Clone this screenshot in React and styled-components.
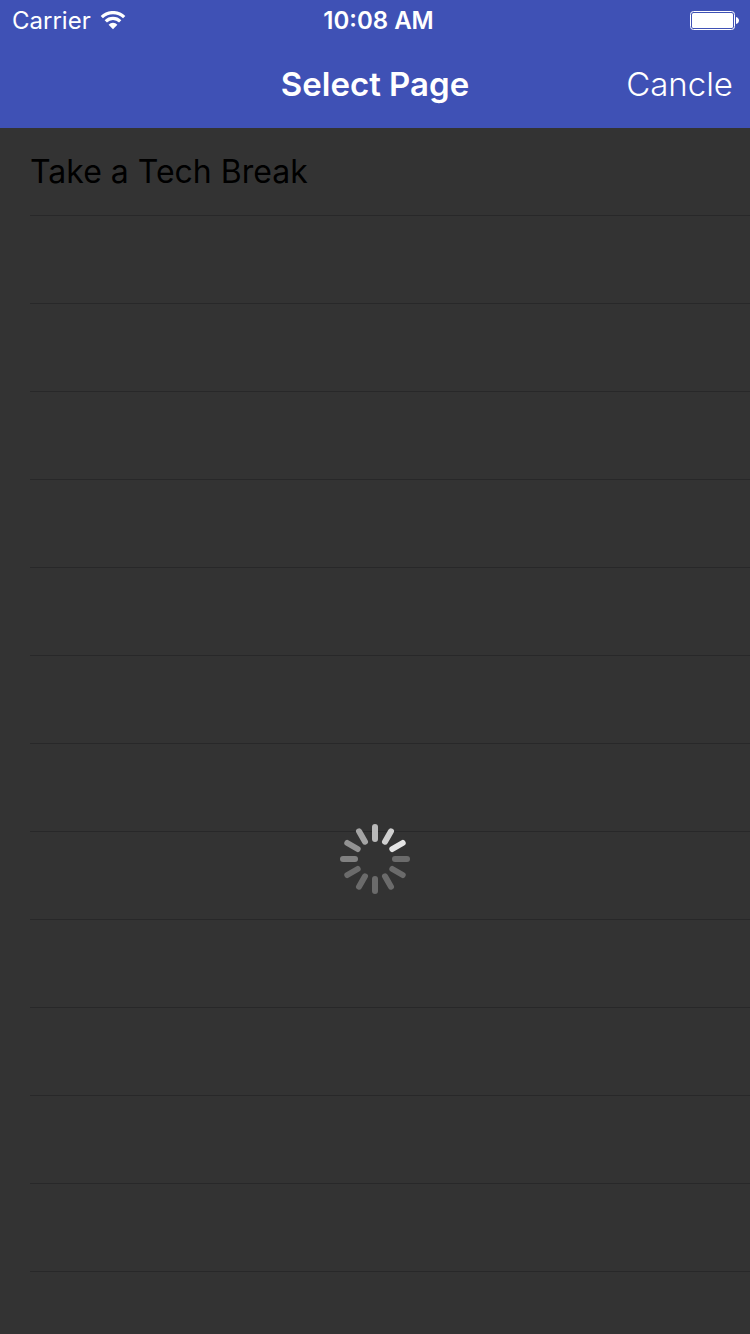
import React from "react";
import styled, { createGlobalStyle } from "styled-components";

const GlobalStyle = createGlobalStyle`
  *, *::before, *::after { box-sizing: border-box; }
  body {
    margin: 0;
    background: #333333;
    font-family: Inter, "Liberation Sans", sans-serif;
  }
`;

const Screen = styled.div`
  display: flex;
  flex-direction: column;
  min-height: 100vh;
`;

const Header = styled.header`
  background: #3f51b5;
  color: #ffffff;
`;

const StatusBar = styled.div`
  display: grid;
  grid-template-columns: 1fr auto 1fr;
  align-items: center;
  height: 40px;
  padding: 0 11px 0 12px;
  font-size: 24px;
  line-height: 42px;
`;

const Carrier = styled.div`
  display: flex;
  align-items: center;
  gap: 9px;
`;

const Clock = styled.time`
  font-weight: 600;
  padding-left: 6px;
`;

const Battery = styled.svg`
  justify-self: end;
  display: block;
`;

const NavBar = styled.div`
  display: grid;
  grid-template-columns: 1fr auto 1fr;
  align-items: center;
  height: 88px;
  padding: 0 17px;
`;

const Title = styled.h1`
  grid-column: 2;
  margin: 0;
  font-size: 33px;
  font-weight: 600;
  line-height: 40px;
`;

const CancelButton = styled.button`
  justify-self: end;
  padding: 0;
  border: 0;
  background: none;
  color: inherit;
  font: inherit;
  font-size: 33px;
  font-weight: 300;
  line-height: 40px;
  cursor: pointer;
`;

const Content = styled.main`
  position: relative;
  flex: 1;
  background: #ffffff;
`;

const PageList = styled.ul`
  margin: 0;
  padding: 0 0 0 30px;
  list-style: none;
`;

const Row = styled.li`
  height: 88px;
  border-bottom: 1px solid #c8c7cc;
  color: #000000;
  font-size: 32px;
  line-height: 87px;
`;

const LoadingOverlay = styled.div`
  position: absolute;
  inset: 0;
  display: flex;
  align-items: center;
  justify-content: center;
  padding-top: 256px;
  background: rgba(0, 0, 0, 0.8);
`;

const spokes = [
  "#b9b9b9", "#cfcfcf", "#e4e4e4", "#6b6b6b", "#6b6b6b", "#6b6b6b",
  "#6b6b6b", "#6b6b6b", "#6b6b6b", "#818181", "#929292", "#a4a4a4",
];

function Spinner() {
  return (
    <svg width="70" height="70" viewBox="-35 -35 70 70" role="img" aria-label="Loading">
      {spokes.map((color, i) => (
        <rect key={i} x="-3" y="-35" width="6" height="18" rx="3" fill={color} transform={`rotate(${i * 30})`} />
      ))}
    </svg>
  );
}

function WifiIcon() {
  return (
    <svg width="26" height="20" viewBox="0 1 26 20" aria-hidden="true">
      <g fill="none" stroke="#ffffff" strokeWidth="3.2">
        <path d="M1.8 7.2a15.8 15.8 0 0 1 22.4 0" />
        <path d="M5.8 11.4a10.1 10.1 0 0 1 14.4 0" />
      </g>
      <path d="M13 19.2l-4.4-4.5a6.2 6.2 0 0 1 8.8 0z" fill="#ffffff" />
    </svg>
  );
}

const pages = ["Take a Tech Break", ...Array(12).fill("")];

export default function App() {
  return (
    <Screen>
      <GlobalStyle />
      <Header>
        <StatusBar>
          <Carrier>
            <span>Carrier</span>
            <WifiIcon />
          </Carrier>
          <Clock>10:08 AM</Clock>
          <Battery width="49" height="20" viewBox="0 1 49 20" aria-label="Battery full" role="img">
            <rect x="0.5" y="1.5" width="44" height="18" rx="3" fill="none" stroke="#ffffff" />
            <rect x="2" y="3" width="41" height="15" rx="1.5" fill="#ffffff" />
            <path d="M46 7c4 1 4 6 0 7z" fill="#ffffff" />
          </Battery>
        </StatusBar>
        <NavBar>
          <Title>Select Page</Title>
          <CancelButton type="button">Cancle</CancelButton>
        </NavBar>
      </Header>
      <Content>
        <PageList>
          {pages.map((name, i) => (
            <Row key={i}>{name}</Row>
          ))}
        </PageList>
        <LoadingOverlay>
          <Spinner />
        </LoadingOverlay>
      </Content>
    </Screen>
  );
}
